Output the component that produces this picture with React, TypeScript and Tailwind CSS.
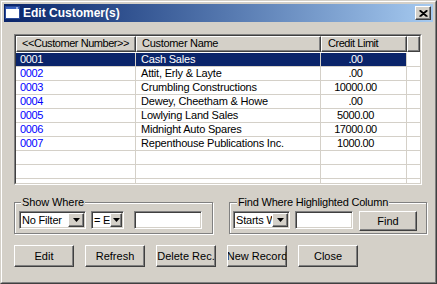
import React from "react";

const rows = [
  ["0001", "Cash Sales", ".00"],
  ["0002", "Attit, Erly & Layte", ".00"],
  ["0003", "Crumbling Constructions", "10000.00"],
  ["0004", "Dewey, Cheetham & Howe", ".00"],
  ["0005", "Lowlying Land Sales", "5000.00"],
  ["0006", "Midnight Auto Spares", "17000.00"],
  ["0007", "Repenthouse Publications Inc.", "1000.00"],
  ["", "", ""],
  ["", "", ""],
  ["", "", ""],
];

const raised =
  "border border-t-white border-l-white border-r-[#404040] border-b-[#404040] shadow-[inset_-1px_-1px_0_#808080] bg-[#d4d0c8]";
const sunken =
  "border border-t-[#808080] border-l-[#808080] border-r-white border-b-white shadow-[inset_1px_1px_0_#404040,inset_-1px_-1px_0_#d4d0c8] p-[1px]";

function Arrow({ w }: { w: string }) {
  return (
    <div className={`${raised} ${w} h-full flex items-center justify-center shrink-0`}>
      <svg width="7" height="4" viewBox="0 0 7 4">
        <path d="M0 0H7L3.5 4Z" fill="#000" />
      </svg>
    </div>
  );
}

function Combo({ text, w, aw }: { text: string; w: string; aw: string }) {
  return (
    <div className={`${sunken} ${w} h-[18px] bg-white flex`}>
      <div className="flex-1 overflow-hidden whitespace-nowrap leading-[14px] pl-[1px] text-[11px] tracking-[-0.2px]">
        {text}
      </div>
      <Arrow w={aw} />
    </div>
  );
}

function Btn({ text, w, h }: { text: string; w: string; h: string }) {
  return (
    <div
      className={`${raised} ${w} ${h} flex items-center justify-center overflow-hidden whitespace-nowrap text-[11px] shrink-0`}
    >
      <span className="shrink-0">{text}</span>
    </div>
  );
}

export default function App() {
  return (
    <div className="w-[437px] h-[284px] border border-t-[#d4d0c8] border-l-[#d4d0c8] border-r-[#404040] border-b-[#404040] bg-[#d4d0c8] font-['Liberation_Sans',Arial,sans-serif] text-black select-none">
      <div className="h-full border border-t-white border-l-white border-r-[#808080] border-b-[#808080] p-[2px] flex flex-col">
        {/* Title bar */}
        <div className="h-[18px] bg-linear-to-r from-[#0a246a] to-[#a6caf0] flex items-center pl-[1px] pr-[2px] shrink-0">
          <svg width="15" height="13" viewBox="0 0 15 13" className="shrink-0 -mt-[2px]">
            <rect x="0.5" y="0.5" width="14" height="12" fill="#fff" stroke="#2a4a9a" />
            <rect x="1" y="1" width="13" height="2" fill="#3a62c0" />
            <rect x="11" y="1.5" width="2" height="1" fill="#fff" />
          </svg>
          <span className="ml-[3px] text-white font-bold text-[12px] leading-[18px]">Edit Customer(s)</span>
          <div className="ml-auto w-[16px] h-[14px] border border-t-white border-l-white border-r-[#404040] border-b-[#404040] shadow-[inset_-1px_-1px_0_#808080] bg-[#d4d0c8] flex items-center justify-center">
            <svg width="9" height="7" viewBox="0 0 9 7">
              <path d="M0.5 0.5L7.5 6.5M1.5 0.5L8.5 6.5M7.5 0.5L0.5 6.5M8.5 0.5L1.5 6.5" stroke="#000" strokeWidth="1.1" />
            </svg>
          </div>
        </div>

        {/* Grid */}
        <div className="mt-[12px] ml-[10px] w-[408px] h-[151px] border border-t-[#808080] border-l-[#808080] border-r-white border-b-white">
          <div className="h-full border border-t-[#404040] border-l-[#404040] border-r-[#d4d0c8] border-b-[#d4d0c8] bg-white overflow-hidden flex flex-col">
            <div className="flex h-[16px] shrink-0 text-[11px] leading-[13px]">
              <div className={`${raised} w-[120px] pl-[5px] tracking-[-0.45px] whitespace-nowrap overflow-hidden`}>
                &lt;&lt;Customer Number&gt;&gt;
              </div>
              <div className={`${raised} w-[185px] pl-[5px] tracking-[-0.3px] whitespace-nowrap`}>Customer Name</div>
              <div className={`${raised} w-[86px] pl-[6px] tracking-[-0.45px] whitespace-nowrap`}>Credit Limit</div>
              <div className={`${raised} flex-1`} />
            </div>
            <div className="pt-[1px] flex flex-col">
              {rows.map((r, i) => {
                const sel = i === 0;
                const cell = sel ? "bg-[#0a246a] text-white" : "";
                return (
                  <div key={i} className="flex h-[14px] shrink-0 text-[11px] leading-[13px]">
                    <div
                      className={`w-[120px] border-r border-b border-[#d4d0c8] pl-[4px] tracking-[-0.4px] ${
                        sel ? cell : "text-[#0000ff]"
                      }`}
                    >
                      {r[0]}
                    </div>
                    <div className={`w-[185px] border-r border-b border-[#d4d0c8] pl-[5px] tracking-[-0.2px] whitespace-nowrap ${cell}`}>
                      {r[1]}
                    </div>
                    <div className={`w-[86px] border-r border-b border-[#d4d0c8] text-center pr-[16px] tracking-[-0.4px] ${cell}`}>
                      {r[2]}
                    </div>
                    <div className="flex-1 border-b border-[#d4d0c8]" />
                  </div>
                );
              })}
            </div>
          </div>
        </div>

        {/* Group boxes */}
        <div className="mt-[17px] ml-[10px] flex gap-[16px]">
          <div className="relative w-[199px] h-[32px] border border-[#808080] shadow-[inset_1px_1px_0_#fff,1px_1px_0_#fff] pt-[8px] pl-[4px] flex items-start">
            <span className="absolute -top-[7px] left-[6px] px-[1px] bg-[#d4d0c8] text-[11px] leading-[13px] tracking-[-0.1px]">
              Show Where
            </span>
            <Combo text="No Filter" w="w-[67px]" aw="w-[16px]" />
            <div className="ml-[5px]">
              <Combo text="= E" w="w-[33px]" aw="w-[12px]" />
            </div>
            <div className={`${sunken} ml-[10px] w-[68px] h-[18px] bg-white`} />
          </div>
          <div className="relative w-[198px] h-[32px] border border-[#808080] shadow-[inset_1px_1px_0_#fff,1px_1px_0_#fff] pt-[8px] pl-[3px] flex items-start">
            <span className="absolute -top-[7px] left-[7px] px-[1px] bg-[#d4d0c8] text-[11px] leading-[13px] tracking-[-0.2px] whitespace-nowrap">
              Find Where Highlighted Column
            </span>
            <Combo text="Starts W" w="w-[57px]" aw="w-[16px]" />
            <div className={`${sunken} ml-[5px] w-[58px] h-[18px] bg-white`} />
            <div className="ml-[6px]">
              <Btn text="Find" w="w-[58px]" h="h-[20px]" />
            </div>
          </div>
        </div>

        {/* Buttons */}
        <div className="mt-[11px] ml-[10px] flex gap-[11px]">
          <Btn text="Edit" w="w-[60px]" h="h-[22px]" />
          <Btn text="Refresh" w="w-[60px]" h="h-[22px]" />
          <Btn text="Delete Rec." w="w-[60px]" h="h-[22px]" />
          <Btn text="New Record" w="w-[60px]" h="h-[22px]" />
          <Btn text="Close" w="w-[60px]" h="h-[22px]" />
        </div>
      </div>
    </div>
  );
}
